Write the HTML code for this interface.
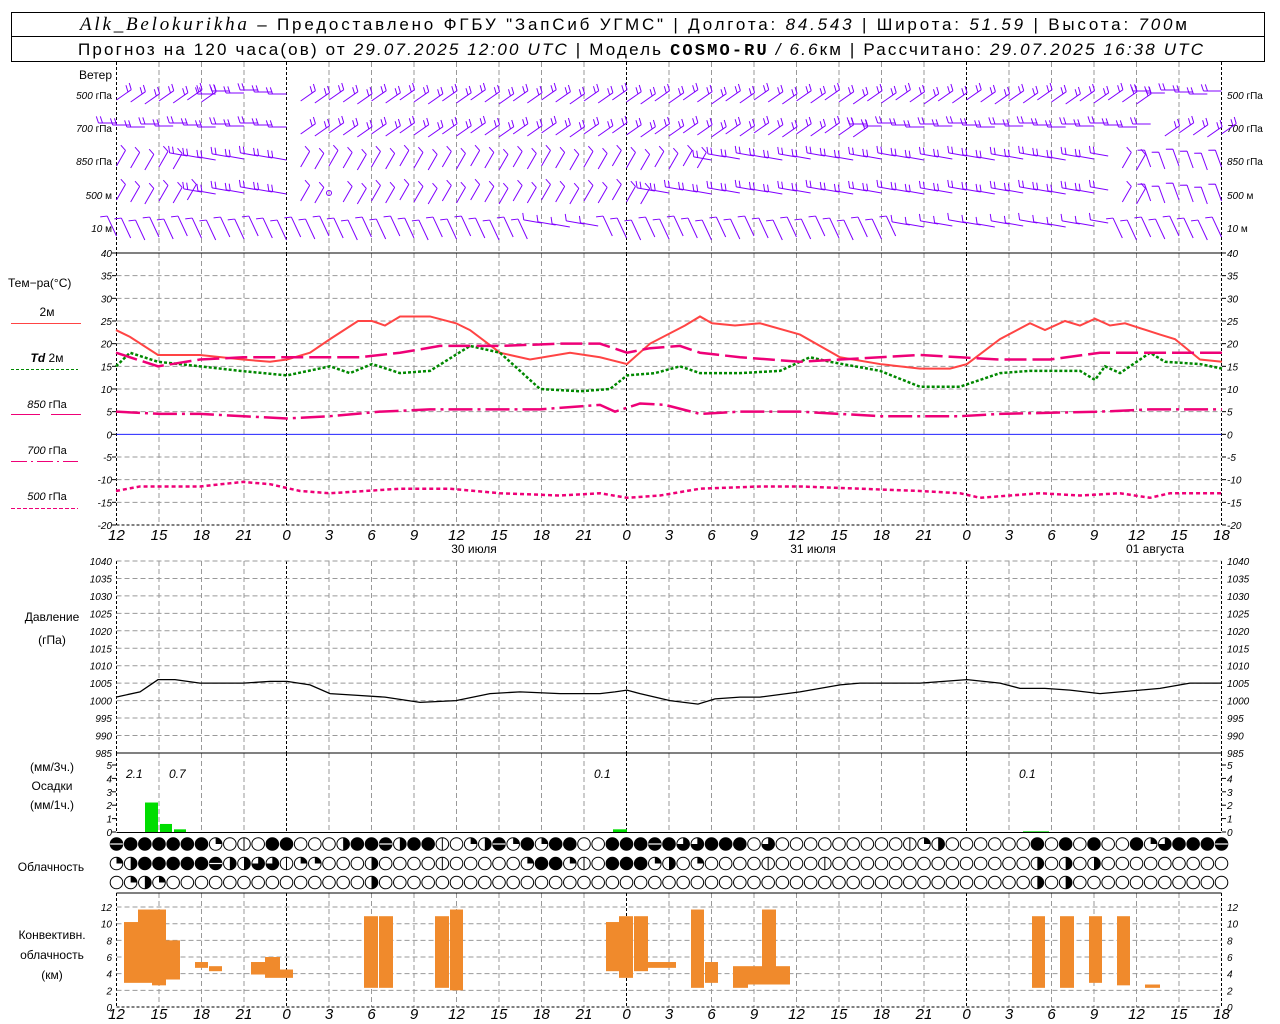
<!DOCTYPE html>
<html><head><meta charset="utf-8"><style>
html,body{margin:0;padding:0;background:#fff;width:1280px;height:1024px;overflow:hidden}
svg{display:block}
text{font-family:"Liberation Sans",sans-serif}
.ax{font-size:10px;font-style:italic}
.lb{font-size:12px}
.xl{font-size:15px;font-style:italic}
.hd{font-size:17px}
.it{font-style:italic}
</style></head><body>
<svg id="s" width="1280" height="1024" xmlns="http://www.w3.org/2000/svg">
<rect x="11.5" y="12.5" width="1253" height="49" fill="none" stroke="#000"/>
<line x1="11" y1="36.5" x2="1265" y2="36.5" stroke="#000"/>
<text x="80" y="30" class="hd" textLength="1107" lengthAdjust="spacing"><tspan font-family="Liberation Serif" font-style="italic" font-size="19">Alk_Belokurikha</tspan> – Предоставлено ФГБУ "ЗапСиб УГМС" | Долгота: <tspan class="it">84.543</tspan> | Широта: <tspan class="it">51.59</tspan> | Высота: <tspan class="it">700</tspan>м</text>
<text x="78" y="55" class="hd" textLength="1125" lengthAdjust="spacing">Прогноз на 120 часа(ов) от <tspan class="it">29.07.2025 12:00 UTC</tspan> | Модель <tspan font-family="Liberation Mono" font-weight="bold">COSMO-RU</tspan> <tspan class="it">/ 6.6</tspan>км | Рассчитано: <tspan class="it">29.07.2025 16:38 UTC</tspan></text>
<g class="lb">
<text x="112" y="79" text-anchor="end">Ветер</text>
<text x="8" y="287">Тем−ра(°C)</text>
<text x="47" y="316" text-anchor="middle">2м</text>
<text x="47" y="362" text-anchor="middle"><tspan class="it" font-weight="bold">Td</tspan>  2м</text>
<text x="47" y="408" text-anchor="middle" font-size="11"><tspan class="it">850</tspan> гПа</text>
<text x="47" y="454" text-anchor="middle" font-size="11"><tspan class="it">700</tspan> гПа</text>
<text x="47" y="500" text-anchor="middle" font-size="11"><tspan class="it">500</tspan> гПа</text>
<text x="52" y="621" text-anchor="middle">Давление</text>
<text x="52" y="644" text-anchor="middle">(гПа)</text>
<text x="52" y="771" text-anchor="middle">(мм/3ч.)</text>
<text x="52" y="790" text-anchor="middle">Осадки</text>
<text x="52" y="809" text-anchor="middle">(мм/1ч.)</text>
<text x="51" y="871" text-anchor="middle">Облачность</text>
<text x="52" y="939" text-anchor="middle">Конвективн.</text>
<text x="52" y="959" text-anchor="middle">облачность</text>
<text x="52" y="979" text-anchor="middle">(км)</text>
<text x="126" y="778" class="it">2.1</text><text x="169" y="778" class="it">0.7</text>
<text x="594" y="778" class="it">0.1</text><text x="1019" y="778" class="it">0.1</text>
<text x="474" y="553" text-anchor="middle">30 июля</text>
<text x="813" y="553" text-anchor="middle">31 июля</text>
<text x="1155" y="553" text-anchor="middle">01 августа</text>
</g>
<line x1="11" y1="323.5" x2="81" y2="323.5" stroke="#f44"/>
<line x1="11" y1="369.5" x2="78" y2="369.5" stroke="#080" stroke-dasharray="3,2"/>
<line x1="11" y1="414.5" x2="40" y2="414.5" stroke="#e07"/><line x1="51" y1="414.5" x2="81" y2="414.5" stroke="#e07"/>
<line x1="11" y1="461.5" x2="78" y2="461.5" stroke="#e07" stroke-dasharray="16,4,2,4"/>
<line x1="11" y1="508.5" x2="78" y2="508.5" stroke="#e07" stroke-dasharray="4,2"/>
<g id="g"></g>
</svg>
<script>
const NS="http://www.w3.org/2000/svg",G=document.getElementById('g');
function el(t,a,txt){const e=document.createElementNS(NS,t);for(const k in a)e.setAttribute(k,a[k]);if(txt!==undefined)e.textContent=txt;G.appendChild(e);return e;}
const L=116.5,R=1221.5,X=h=>L+h*14.1667;
const secs=[[62,253],[253,525],[561,753],[753,832],[893,1007]];
for(let k=0;k<=26;k++){const x=L+k*42.5;const blk=(k%8==4)||k==0||k==26;
 for(const s of secs)el('line',{x1:x,y1:s[0],x2:x,y2:s[1],stroke:blk?'#000':'#999','stroke-dasharray':blk?'3,2':'5,3','stroke-width':1});}
const TY=t=>253+(40-t)*4.533;
for(let t=40;t>=-20;t-=5){const y=TY(t);
 if(t==40)el('line',{x1:L,y1:y,x2:R,y2:y,stroke:'#000'});
 else if(t==0)el('line',{x1:L,y1:y,x2:R,y2:y,stroke:'#00f','stroke-width':0.8});
 else el('line',{x1:L,y1:y,x2:R,y2:y,stroke:t==-20?'#000':'#999','stroke-dasharray':t==-20?'3,2':'5,3'});
 el('text',{x:112,y:y+4,class:'ax','text-anchor':'end'},t);el('text',{x:1227,y:y+4,class:'ax'},t);
 el('line',{x1:112,y1:y,x2:116,y2:y,stroke:'#000'});el('line',{x1:1222,y1:y,x2:1226,y2:y,stroke:'#000'});}
const PY=p=>561+(1040-p)*3.49;
for(let p=1040;p>=985;p-=5){const y=PY(p);
 el('line',{x1:L,y1:y,x2:R,y2:y,stroke:p==985?'#000':'#999','stroke-dasharray':p==985?'':'5,3'});
 el('text',{x:112,y:y+4,class:'ax','text-anchor':'end'},p);el('text',{x:1227,y:y+4,class:'ax'},p);}
const RY=r=>832-r*13.4;
for(let r=0;r<=5;r++){const y=RY(r);el('text',{x:112,y:y+4,class:'ax','text-anchor':'end'},r);el('text',{x:1227,y:y+4,class:'ax'},r);
 el('line',{x1:112,y1:y,x2:116,y2:y,stroke:'#000'});el('line',{x1:1222,y1:y,x2:1226,y2:y,stroke:'#000'});}
el('line',{x1:L,y1:832.5,x2:R,y2:832.5,stroke:'#000'});
el('line',{x1:L,y1:893,x2:R,y2:893,stroke:'#000'});
const CY=k=>1007-k*8.33;
for(let k=0;k<=12;k+=2){const y=CY(k);
 if(k>0)el('line',{x1:L,y1:y,x2:R,y2:y,stroke:'#999','stroke-dasharray':'5,3'});else el('line',{x1:L,y1:y,x2:R,y2:y,stroke:'#000','stroke-dasharray':'3,2'});
 el('text',{x:112,y:y+4,class:'ax','text-anchor':'end'},k);el('text',{x:1227,y:y+4,class:'ax'},k);}
const hl=[12,15,18,21,0,3,6,9,12,15,18,21,0,3,6,9,12,15,18,21,0,3,6,9,12,15,18];
hl.forEach((h,i)=>{const x=L+i*42.5;el('text',{x:x,y:540,class:'xl','text-anchor':'middle'},h);el('text',{x:x,y:1019,class:'xl','text-anchor':'middle'},h);});
[['500','гПа',99],['700','гПа',132],['850','гПа',165],['500','м',199],['10','м',232]].forEach(r=>{
 const t=el('text',{x:112,y:r[2],'font-size':10,'text-anchor':'end'});t.innerHTML='<tspan font-style="italic">'+r[0]+'</tspan>  '+r[1];
 const t2=el('text',{x:1227,y:r[2],'font-size':10});t2.innerHTML='<tspan font-style="italic">'+r[0]+'</tspan>  '+r[1];});
function curve(pts,fn,st){el('polyline',Object.assign({points:pts.map(p=>p[0]+','+fn(p[1])).join(' '),fill:'none'},st));}
curve([[116,23],[130,21.5],[158,17.5],[200,17.5],[243,16.5],[270,16],[287,16.5],[310,18],[330,21],[358,25],[372,25],[385,24],[400,26],[430,26],[456,24.5],[470,23],[500,18],[530,16.5],[570,18],[600,17],[627,15.5],[650,20],[685,24],[700,26],[712,24.5],[735,24],[760,24.5],[800,22],[840,17],[880,15.5],[920,14.5],[950,14.5],[967,15.5],[1000,21],[1030,24.5],[1045,23],[1065,25],[1080,24],[1095,25.5],[1110,24],[1125,24.5],[1160,22],[1175,21],[1200,16.5],[1222,16]],TY,{stroke:'#f44','stroke-width':2});
curve([[116,15],[130,18],[158,16],[200,15],[240,14],[287,13],[330,15],[350,13.5],[372,15.5],[400,13.5],[430,14],[470,19.5],[500,18],[540,10],[580,9.5],[610,10],[627,13],[655,13.5],[680,15],[700,13.5],[740,13.5],[780,14],[810,17],[830,16],[880,14],[920,10.5],[960,10.5],[1000,13.5],[1030,14],[1080,14],[1095,12],[1105,15],[1120,13.5],[1150,18],[1165,16],[1200,15.5],[1222,14.5]],TY,{stroke:'#080','stroke-width':2.5,'stroke-dasharray':'3,2'});
curve([[116,18],[158,15],[200,16.5],[243,17],[287,17],[330,17],[360,17],[400,18],[440,19.5],[500,19.5],[560,20],[600,20],[627,18],[650,19],[680,19.5],[700,18],[740,17],[800,16],[840,16.5],[880,17],[920,17.5],[960,17],[1000,16.5],[1050,16.5],[1100,18],[1160,18],[1222,18]],TY,{stroke:'#e07','stroke-width':2.5,'stroke-dasharray':'22,6'});
curve([[116,5],[160,4.5],[200,4.5],[287,3.5],[330,4],[380,5],[430,5.5],[470,5.5],[540,5.5],[600,6.5],[615,5],[640,6.8],[665,6.5],[700,4.5],[740,5],[800,5],[880,4],[960,4],[1000,4.5],[1100,5],[1150,5.5],[1222,5.5]],TY,{stroke:'#e07','stroke-width':2.5,'stroke-dasharray':'24,5,3,5'});
curve([[116,-12.5],[140,-11.5],[200,-11.5],[243,-10.5],[270,-11],[300,-12.5],[330,-13],[400,-12],[450,-12],[500,-13],[560,-13.5],[600,-13],[627,-14],[660,-13.5],[700,-12],[760,-11.5],[800,-11.5],[860,-12],[920,-12.5],[960,-13],[980,-14],[1040,-13],[1080,-13.5],[1120,-13],[1150,-14],[1170,-13],[1222,-13]],TY,{stroke:'#e07','stroke-width':2.5,'stroke-dasharray':'4,3'});
curve([[116,1001],[140,1002.5],[158,1006],[175,1006],[200,1005],[243,1005],[270,1005.5],[287,1005.5],[310,1004.5],[330,1002],[358,1001.5],[385,1001],[420,999.5],[456,1000],[490,1002],[520,1002.5],[560,1002],[600,1002],[615,1002.5],[627,1003],[640,1002],[670,1000],[698,999],[715,1000.5],[740,1001],[760,1001],[800,1002.5],[840,1004.5],[860,1005],[920,1005],[967,1006],[1000,1005],[1020,1003.5],[1045,1003.5],[1070,1003],[1100,1002],[1140,1003],[1160,1003.5],[1190,1005],[1222,1005]],PY,{stroke:'#000','stroke-width':1.3});
[[145,158,2.2],[160,172,0.6],[174,186,0.2],[613,627,0.2],[1023,1036,0.05],[1036,1049,0.05]].forEach(b=>el('rect',{x:b[0],y:RY(b[2]),width:b[1]-b[0],height:b[2]*13.4,fill:'#0d0'}));
[[124,138,10.2,2.9],[138,166,11.7,2.9],[152,166,3,2.6],[166,180,8,3.3],[195,208,5.4,4.7],[209,222,4.9,4.3],[251,265,5.4,3.9],[265,280,6,3.5],[280,293,4.5,3.5],[364,378,10.9,2.3],[379,393,10.9,2.3],[435,449,10.9,2.3],[450,463,11.7,2],[606,619,10.2,4.3],[619,633,10.9,3.5],[634,648,10.9,4.3],[648,676,5.4,4.7],[691,704,11.7,2.3],[705,718,5.4,2.9],[733,748,4.9,2.3],[748,762,4.9,2.7],[762,776,11.7,2.7],[776,790,4.9,2.7],[1032,1045,10.9,2.3],[1060,1074,10.9,2.3],[1089,1102,10.9,2.9],[1117,1130,10.9,2.6],[1145,1160,2.7,2.3]].forEach(b=>el('rect',{x:b[0],y:CY(b[2]),width:b[1]-b[0],height:(b[2]-b[3])*8.33,fill:'#f08a2c'}));
const r1=[5,4,4,4,4,4,4,1,0,6,0,4,4,0,0,0,2,4,4,5,2,4,4,6,0,1,2,5,1,4,1,4,4,0,0,4,4, 4,5,4,3,3,4,4,4,0,3, 0,0,0,0,0,0,0,0,0, 6,1,2, 0,0,0,0,0,0, 4,0,4,0,4,0,0,4,1,3,4,4,4,5];
const r2=Array(79).fill(0);[[0,1],[1,2],[2,4],[3,4],[4,4],[5,4],[6,4],[7,5],[8,2],[9,2],[10,3],[11,3],[12,6],[13,1],[14,1],[18,2],[23,6],[29,1],[30,4],[31,4],[32,1],[33,6],[35,4],[36,4],[37,4],[38,1],[39,2],[41,1],[46,6],[50,6],[65,2],[67,2],[69,2]].forEach(a=>r2[a[0]]=a[1]);
const r3=Array(79).fill(0);[[1,1],[2,2],[3,1],[18,2],[65,2],[67,2]].forEach(a=>r3[a[0]]=a[1]);
function cloud(cx,cy,v){const r=6.3;
 if(v==4){el('circle',{cx,cy,r,fill:'#000',stroke:'#000'});return;}
 el('circle',{cx,cy,r,fill:'#fff',stroke:'#000','stroke-width':1});
 if(v==1)el('path',{d:`M${cx},${cy}L${cx},${cy-r}A${r},${r} 0 0 1 ${cx+r},${cy}Z`,fill:'#000'});
 if(v==2)el('path',{d:`M${cx},${cy-r}A${r},${r} 0 0 1 ${cx},${cy+r}Z`,fill:'#000'});
 if(v==3)el('path',{d:`M${cx},${cy}L${cx},${cy-r}A${r},${r} 0 1 1 ${cx-r},${cy}Z`,fill:'#000'});
 if(v==5){el('circle',{cx,cy,r,fill:'#000'});el('line',{x1:cx-r,y1:cy,x2:cx+r,y2:cy,stroke:'#fff','stroke-width':1.2});}
 if(v==6)el('line',{x1:cx,y1:cy-r,x2:cx,y2:cy+r,stroke:'#000'});}
for(let i=0;i<79;i++){const x=X(i);cloud(x,844,r1[i]);cloud(x,863.5,r2[i]);cloud(x,882.5,r3[i]);}
const C='#8000ff';
function barb(x,y,ang,len,n,side){const a=ang*Math.PI/180,dx=Math.cos(a),dy=-Math.sin(a);
 const ex=x+dx*len,ey=y+dy*len;let d=`M${x},${y}L${ex},${ey}`;
 const pa=a+side*1.25,px=Math.cos(pa)*7,py=-Math.sin(pa)*7;
 for(let i=0;i<n;i++){const bx=ex-dx*i*4,by=ey-dy*i*4;d+=`M${bx},${by}l${px},${py}`;}
 el('path',{d,stroke:C,fill:'none','stroke-width':1});}
const rows=[[95,x=>(x>215&&x<300)||(x>1150)?[180,2,-1]:[35,2,1]],
 [128,x=>(x<287)||(x>860&&x<1160)?[180,2,-1]:[35,2,1]],
 [161,x=>(x<287&&x>180)||(x>700&&x<1120)?[170,2,-1]:(x>1150?[110,1,1]:[60,1,1])],
 [195,x=>(x<300&&x>200)||(x>650&&x<1120)?[170,2,-1]:(x>1150?[110,1,1]:[60,1,1])],
 [228,x=>(x>530&&x<600)||(x>900&&x<1110)?[170,1,-1]:[115,1,1]]];
for(const [y,f] of rows){for(let i=0;i<=78;i++){const x=X(i);if(y==195&&i==15){el('circle',{cx:x,cy:y-2,r:2.5,fill:'none',stroke:C});continue;}
 const [ang,n,s]=f(x);const len=(y==228&&ang==115)?22:18;
 const yy=y+((i*7)%5)-2;barb(x,yy+(ang>=170?-3:(y==228?10:7)),ang,len,n,s);}}
</script>
</body></html>
